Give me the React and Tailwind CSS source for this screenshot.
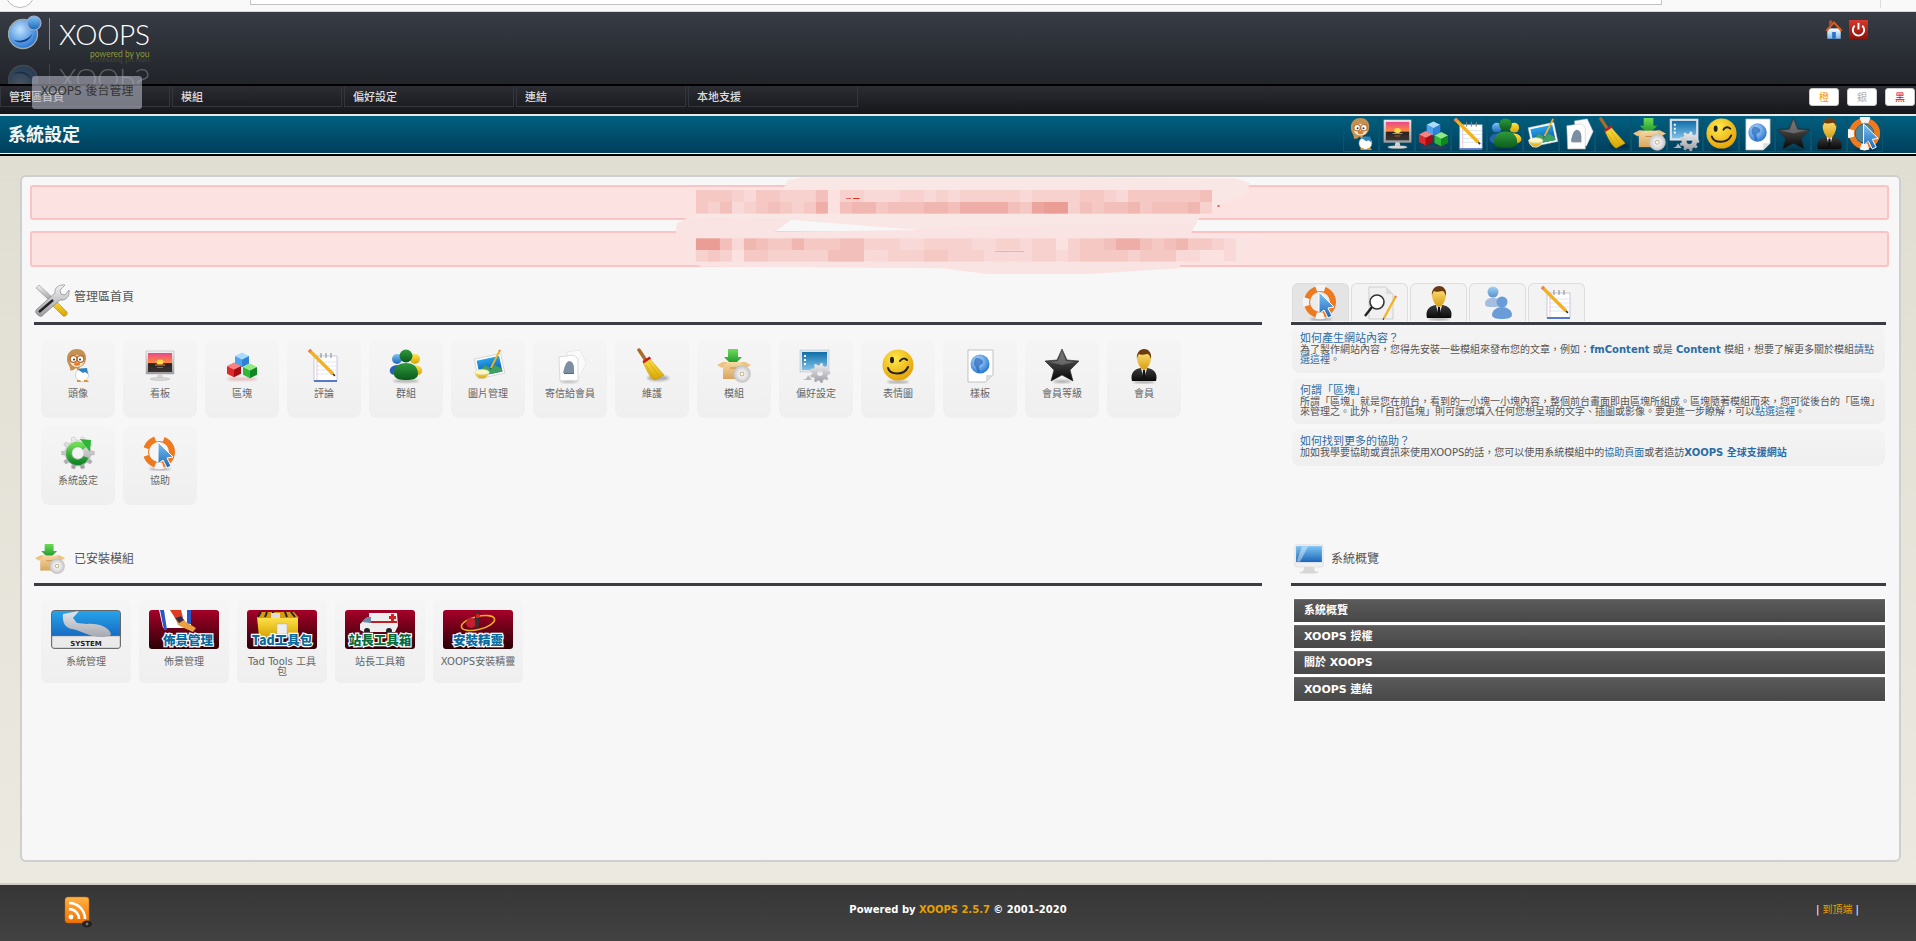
import React from 'react';

// gear outline with a round hole, used by a few of the icons
const gearPath = (cx, cy, r, teeth, hole) => {
  let d = '';
  const step = (Math.PI * 2) / teeth;
  for (let i = 0; i < teeth; i++) {
    const a = i * step;
    const pts = [
      [r * 0.78, a - step * 0.5],
      [r * 0.78, a - step * 0.28],
      [r, a - step * 0.16],
      [r, a + step * 0.16],
      [r * 0.78, a + step * 0.28],
    ];
    pts.forEach(([rad, ang], j) => {
      const x = (cx + rad * Math.cos(ang)).toFixed(2);
      const y = (cy + rad * Math.sin(ang)).toFixed(2);
      d += `${i === 0 && j === 0 ? 'M' : 'L'}${x} ${y}`;
    });
  }
  d += `Z M${cx - hole} ${cy}a${hole} ${hole} 0 1 0 ${hole * 2} 0a${hole} ${hole} 0 1 0 ${-hole * 2} 0Z`;
  return d;
};

const Defs = () => {
  const grads = {
    gBlue: ['#7cc4f4', '#1b66b8'],
    gRed: ['#f25a5a', '#b80c14'],
    gGreen: ['#6fdc58', '#0f8a24'],
    gDarkGreen: ['#2f9a3c', '#0b5a1c'],
    gYellow: ['#ffe34d', '#d6a400'],
    gOrange: ['#ffb347', '#f07000'],
    gBlack: ['#6a6a6a', '#050505'],
    gSilver: ['#f2f2f2', '#9a9aa2'],
    gWrench: ['#e4e6ea', '#a4a8b0'],
    gBox: ['#f6d9a4', '#d9a55f'],
    gMaroon: ['#a60028', '#2c0006'],
    gSky: ['#27a4ea', '#0c4fb0'],
    gScreen: ['#0f6ea8', '#7fc2e8'],
    gSuit: ['#3c3c3c', '#0a0a0a'],
    gFace: ['#ffe680', '#d89c10'],
    gHome: ['#ffffff', '#7db4e8'],
    gPower: ['#d8382c', '#8c1408'],
  };
  return (
    <svg className="absolute w-0 h-0" aria-hidden="true">
      <defs>
        {Object.entries(grads).map(([id, [a, b]]) => (
          <linearGradient key={id} id={id} x1="0" y1="0" x2="0" y2="1">
            <stop offset="0" stopColor={a} />
            <stop offset="1" stopColor={b} />
          </linearGradient>
        ))}
        <linearGradient id="gSunset" x1="0" y1="0" x2="0" y2="1">
          <stop offset="0" stopColor="#e8488c" />
          <stop offset="0.5" stopColor="#ff8a3c" />
          <stop offset="0.56" stopColor="#2a2420" />
          <stop offset="1" stopColor="#3c3430" />
        </linearGradient>
        <radialGradient id="gSmile" cx="0.4" cy="0.3" r="0.8">
          <stop offset="0" stopColor="#ffe94a" />
          <stop offset="1" stopColor="#e29a00" />
        </radialGradient>
        <radialGradient id="gGlobe" cx="0.4" cy="0.35" r="0.7">
          <stop offset="0" stopColor="#bfe2ff" />
          <stop offset="1" stopColor="#1f6fd0" />
        </radialGradient>
        <radialGradient id="gCd" cx="0.5" cy="0.5" r="0.5">
          <stop offset="0" stopColor="#c8b070" />
          <stop offset="0.3" stopColor="#f4f4f4" />
          <stop offset="1" stopColor="#c4c4c4" />
        </radialGradient>
        <filter id="fBlur" x="-30%" y="-100%" width="160%" height="300%">
          <feGaussianBlur stdDeviation="1.2" />
        </filter>
      </defs>
    </svg>
  );
};

const Shadow = ({ cx = 18, cy = 34, rx = 10, ry = 1.4 }) => (
  <ellipse cx={cx} cy={cy} rx={rx} ry={ry} fill="#000" opacity="0.3" filter="url(#fBlur)" />
);

const Cube = ({ x, y, s, top, fill, side }) => (
  <g>
    <path d={`M${x} ${y}l${s} ${-s * 0.5}l${s} ${s * 0.5}l${-s} ${s * 0.5}z`} fill={top} />
    <path d={`M${x} ${y}l${s} ${s * 0.5}v${s * 1.1}l${-s} ${-s * 0.5}z`} fill={fill} />
    <path d={`M${x + s * 2} ${y}l${-s} ${s * 0.5}v${s * 1.1}l${s} ${-s * 0.5}z`} fill={side} />
  </g>
);

const Pencil = ({ x1, y1, x2, y2, w = 3 }) => (
  <g>
    <line x1={x1} y1={y1} x2={x2} y2={y2} stroke="#f4b21a" strokeWidth={w} />
    <line x1={x1} y1={y1} x2={x1 + (x2 - x1) * 0.08} y2={y1 + (y2 - y1) * 0.08} stroke="#e8806a" strokeWidth={w} />
    <line x1={x2} y1={y2} x2={x2 + (x2 - x1) * 0.08} y2={y2 + (y2 - y1) * 0.08} stroke="#333" strokeWidth={w * 0.5} />
  </g>
);

const icons = {
  avatar: (
    <g>
      <ellipse cx="22" cy="27" rx="6.5" ry="6.5" fill="#fff" stroke="#a8b8cc" strokeWidth="0.6" />
      <path d="M17 21l10-1 1 6-3-2-2 1z" fill="#2a84c0" />
      <path d="M17 34h4l-1-2h-3zM24 34h5l-2-2h-3z" fill="#e89020" />
      <path d="M7 11c0-7 5-10 10-10s9 3 9 9c0 5-3 8-6 9l-2 3-2-2c-2 2-4 3-6 2 1-3-3-6-3-11z" fill="#c49152" />
      <ellipse cx="17" cy="13" rx="7" ry="6" fill="#f6ead8" />
      <circle cx="13.5" cy="11" r="3.3" fill="#fff" stroke="#b8682c" strokeWidth="1.2" />
      <circle cx="20.5" cy="11" r="3.3" fill="#fff" stroke="#b8682c" strokeWidth="1.2" />
      <circle cx="14" cy="11.5" r="1" fill="#333" />
      <circle cx="20" cy="11.5" r="1" fill="#333" />
      <ellipse cx="17" cy="16" rx="3" ry="1.8" fill="#e87c20" />
    </g>
  ),
  banner: (
    <g>
      <rect x="4" y="3" width="28" height="23" fill="url(#gSilver)" stroke="#aaa" strokeWidth="0.5" />
      <rect x="6" y="5" width="24" height="19" fill="url(#gSunset)" />
      <ellipse cx="18" cy="14" rx="3.5" ry="2.6" fill="#ffd84a" />
      <rect x="13" y="16.5" width="10" height="1" fill="#e88030" />
      <rect x="15" y="19" width="6" height="1" fill="#a86028" />
      <path d="M16 26h4l1 4h-6z" fill="#d4d4d4" />
      <ellipse cx="18" cy="31" rx="10" ry="1.5" fill="#d8d8d8" stroke="#aaa" strokeWidth="0.4" />
    </g>
  ),
  blocks: (
    <g>
      <ellipse cx="18" cy="31" rx="15" ry="1.6" fill="#c03030" opacity="0.3" filter="url(#fBlur)" />
      <Cube x={11} y={8} s={7} top="#a8dcff" fill="#4ea2ee" side="#2f82d8" />
      <Cube x={3} y={18} s={7} top="#f88080" fill="#e02828" side="#a80c10" />
      <Cube x={19} y={19} s={7} top="#90ec80" fill="#30b838" side="#108820" />
    </g>
  ),
  comment: (
    <g>
      <path d="M8 8h23v24a1 1 0 0 1-1 1H8z" fill="#fff" stroke="#aeb6d0" strokeWidth="0.7" />
      <path d="M8 32h23v2H8z" fill="#5878c8" />
      <path d="M11 8v24" stroke="#e89090" strokeWidth="0.5" />
      <path d="M10 14h20M10 18h20M10 22h20M10 26h20" stroke="#b8c8e8" strokeWidth="0.5" />
      <path d="M15 5v5M20 5v5M25 5v5" stroke="#888" strokeWidth="1" />
      <Pencil x1={3} y1={2} x2={27} y2={26} w={3.4} />
    </g>
  ),
  groups: (
    <g>
      <Shadow cx={18} cy={33} rx={13} />
      <circle cx="27" cy="11" r="5" fill="url(#gYellow)" />
      <path d="M20 19c3-3 12-3 14 2 1 3-1 6-5 6h-9z" fill="url(#gYellow)" />
      <circle cx="9" cy="11" r="5" fill="url(#gBlue)" />
      <path d="M16 19c-3-3-12-3-14 2-1 3 1 6 5 6h9z" fill="#2a62b0" />
      <circle cx="18" cy="8" r="6.5" fill="url(#gDarkGreen)" />
      <path d="M6 26c0-8 6-11 12-11s12 3 12 11c0 5-6 6-12 6s-12-1-12-6z" fill="url(#gDarkGreen)" />
    </g>
  ),
  image: (
    <g>
      <g transform="rotate(-12 20 18)">
        <rect x="6" y="8" width="27" height="20" fill="#fff" stroke="#bbb" strokeWidth="0.5" />
        <rect x="8" y="10" width="23" height="16" fill="url(#gSky)" />
        <path d="M8 22l7-6 6 5 4-3 6 5v3H8z" fill="#3ca060" />
      </g>
      <Pencil x1={30} y1={2} x2={21} y2={20} w={1.8} />
      <path d="M5 24h14a7 7 0 0 1-14 0z" fill="url(#gYellow)" stroke="#ddd" strokeWidth="1" />
      <ellipse cx="12" cy="24" rx="7" ry="2.6" fill="#fff7c0" stroke="#ddd" strokeWidth="0.6" />
    </g>
  ),
  mail: (
    <g>
      <path d="M15 4l13-2 6 13-7 15-10-4z" fill="#fafafa" stroke="#dcdcdc" strokeWidth="0.5" />
      <path d="M7 9l15-2 4 4v22H8z" fill="#fff" stroke="#c4c4c4" strokeWidth="0.6" />
      <path d="M17 13c3 0 5 3 5 7v5H11c1-3 2-11 6-12z" fill="#7c8ea2" />
      <path d="M12 25h10v1H12z" fill="#58687a" />
      <Shadow cx={17} cy={34} rx={9} ry={0.8} />
    </g>
  ),
  broom: (
    <g>
      <ellipse cx="24" cy="30" rx="11" ry="3" fill="#000" opacity="0.28" filter="url(#fBlur)" />
      <line x1="5" y1="2" x2="13" y2="14" stroke="#a86c28" strokeWidth="3.4" strokeLinecap="round" />
      <path d="M9 14l6-4 15 17-9 5c-3 0-8-8-12-18z" fill="url(#gYellow)" stroke="#c09000" strokeWidth="0.5" />
      <path d="M12 17l9 15M15 14l11 16" stroke="#c49a00" strokeWidth="0.5" />
      <path d="M8.5 13l7-4.5 1.6 2-7.5 5z" fill="#cc1820" />
    </g>
  ),
  module: (
    <g>
      <path d="M12 1h10v8h4l-9 9-9-9h4z" fill="url(#gGreen)" />
      <path d="M7 14h22v17H7z" fill="url(#gBox)" />
      <path d="M7 14l-6 3 5 3 5-6zM29 14l6 3-5 3-5-6z" fill="#eec27f" />
      <path d="M14 20h8" stroke="#c48a40" strokeWidth="1" />
      <circle cx="26" cy="26" r="8.5" fill="url(#gCd)" stroke="#bbb" strokeWidth="0.4" />
      <circle cx="26" cy="26" r="2" fill="#fff" stroke="#b09860" strokeWidth="0.8" />
    </g>
  ),
  prefs: (
    <g>
      <rect x="2" y="2" width="29" height="22" fill="#dfe4ea" stroke="#b8bcc4" strokeWidth="0.5" />
      <rect x="4" y="4" width="25" height="18" fill="url(#gScreen)" />
      <path d="M6 7h2v2H6zM6 11h2v2H6zM6 15h2v2H6z" fill="#fff" />
      <path fillRule="evenodd" d={gearPath(22, 25, 10, 9, 3)} fill="url(#gSilver)" stroke="#c4c4c4" strokeWidth="0.3" />
      <path d="M10 27c-1 4-3 4-5 5h9z" fill="#b8b8b8" />
    </g>
  ),
  smile: (
    <g>
      <Shadow cx={18} cy={34} rx={11} />
      <circle cx="18" cy="17" r="15.5" fill="url(#gSmile)" />
      <ellipse cx="12" cy="12" rx="2" ry="3.2" fill="#222" />
      <path d="M20 13c2-3 5-3 7-1" stroke="#222" strokeWidth="2" fill="none" strokeLinecap="round" />
      <path d="M8 20c2 7 16 8 20-1" stroke="#222" strokeWidth="2" fill="none" strokeLinecap="round" />
    </g>
  ),
  template: (
    <g>
      <path d="M6 2h25v25l-7 7H6z" fill="#fff" stroke="#aaa" strokeWidth="0.7" />
      <path d="M31 27h-7v7z" fill="#ddd" />
      <circle cx="18" cy="16" r="9.5" fill="url(#gGlobe)" />
      <path d="M14 10c3 0 7 1 7 4s-4 2-4 5 2 5 0 6c-3-2-2-5-4-7s-1-6 1-8z" fill="#2566b8" opacity="0.7" />
    </g>
  ),
  star: (
    <g>
      <Shadow cx={18} cy={33.5} rx={9} />
      <path d="M18 1l5 11 12 1-9 9 3 11-11-6-11 6 3-11-9-9 12-1z" fill="url(#gBlack)" stroke="#222" strokeWidth="0.6" strokeLinejoin="round" />
      <path d="M18 4l4 9 9 1-9 2-4 1-4-1-9-2 9-1z" fill="#888" opacity="0.55" />
    </g>
  ),
  person: (
    <g>
      <Shadow cx={18} cy={34} rx={11} />
      <path d="M6 33c-2-8 2-12 9-13h6c7 1 11 5 9 13z" fill="url(#gSuit)" />
      <path d="M15 20h6l-3 12z" fill="#fff" />
      <path d="M17 22h2l1 10h-4z" fill="#111" />
      <path d="M11 10c0-6 3-8 7-8s7 2 7 8c0 5-4 12-7 12s-7-7-7-12z" fill="url(#gFace)" />
      <path d="M11 11c-1-6 3-10 7-10s8 3 7 10c-1-3-2-5-4-5-3 1-7 1-8 0-1 1-2 3-2 5z" fill="#6a3a10" />
    </g>
  ),
  help: (
    <g>
      <Shadow cx={18} cy={34} rx={11} />
      <circle cx="17" cy="17" r="13" fill="none" stroke="#ee7a20" strokeWidth="6" />
      <path d="M13 3.5a13 13 0 0 1 9 0M3.5 21a13 13 0 0 1 0-8M13 30.5a13 13 0 0 0 8 0" stroke="#f4f4f4" strokeWidth="6.4" fill="none" />
      <circle cx="17" cy="17" r="9.5" fill="#fff" opacity="0.3" />
      <path d="M16 7l15 15-6 1 4 8-4 2-4-8-5 4z" fill="url(#gBlue)" stroke="#fff" strokeWidth="1" strokeLinejoin="round" />
    </g>
  ),
  system: (
    <g>
      <path fillRule="evenodd" d={gearPath(18, 18, 16.5, 10, 6)} fill="url(#gSilver)" stroke="#aaa" strokeWidth="0.4" />
      <path d="M25 13a9 9 0 1 0 1 9" stroke="url(#gGreen)" strokeWidth="5.5" fill="none" />
      <path d="M20 4l11 1-1 12z" fill="#2fb43a" />
    </g>
  ),
  tools: (
    <g>
      <path d="M2 5l3-3 14 13-3 3z" fill="url(#gSilver)" stroke="#666" strokeWidth="0.4" />
      <path d="M15 19l4-4 14 14c1 2-1 5-4 4z" fill="url(#gYellow)" stroke="#a87c00" strokeWidth="0.5" />
      <path d="M4 32c-3-2-3-4-1-6L21 10c-1-5 4-9 10-8l-5 5 1 4 4 1 4-5c1 6-3 11-9 10L8 33c-1 1-3 0-4-1z" fill="url(#gSilver)" stroke="#666" strokeWidth="0.5" />
      <path d="M5 29L19 17" stroke="#222" strokeWidth="2.4" />
    </g>
  ),
  imac: (
    <g>
      <rect x="2" y="2" width="32" height="25" rx="2" fill="#f0f0f0" stroke="#d0d0d0" strokeWidth="0.5" />
      <rect x="3.500" y="3.500" width="29" height="18" fill="url(#gBlue)" />
      <path d="M4 21l6-17h7L8 21z" fill="#fff" opacity="0.4" />
      <path d="M13 27h10l2 5H11z" fill="#d8d8d8" />
      <ellipse cx="18" cy="33" rx="11" ry="1.4" fill="#ccc" opacity="0.8" />
    </g>
  ),
  magnify: (
    <g>
      <path d="M7 2h17l7 7v25H7z" fill="#f0f0f0" stroke="#bbb" strokeWidth="0.6" />
      <path d="M24 2v7h7z" fill="#ddd" />
      <circle cx="15" cy="17" r="7" fill="#fff" stroke="#333" strokeWidth="1.6" />
      <line x1="10" y1="22" x2="3" y2="31" stroke="#222" strokeWidth="2.4" />
      <Pencil x1={34} y1={11} x2={22} y2={33} w={2.2} />
    </g>
  ),
  usersBlue: (
    <g>
      <circle cx="13" cy="7" r="5.5" fill="url(#gBlue)" opacity="0.7" />
      <path d="M5 19c0-5 4-6 8-6s8 1 8 6c0 3-4 3-8 3s-8 0-8-3z" fill="#a4bee0" />
      <circle cx="22" cy="17" r="5.5" fill="#6a9cd8" />
      <path d="M12 30c0-5 5-8 10-8s10 3 10 8c0 3-5 4-10 4s-10-1-10-4z" fill="#6a9cd8" />
    </g>
  ),
  rss: (
    <g>
      <rect x="2" y="2" width="24" height="26" rx="3" fill="url(#gOrange)" stroke="#c86000" strokeWidth="0.5" />
      <circle cx="8" cy="22" r="2.4" fill="#fff" />
      <path d="M6 14a10 10 0 0 1 10 10M6 8a16 16 0 0 1 16 16" stroke="#fff" strokeWidth="2.6" fill="none" />
      <ellipse cx="24" cy="29" rx="5" ry="3.500" fill="#222" />
      <circle cx="24" cy="29" r="1.400" fill="#777" />
    </g>
  ),
  house: (
    <g>
      <path d="M7 17h22v17H7z" fill="url(#gHome)" />
      <path d="M4 20l14-15 14 15-3 2-11-12-11 12z" fill="#d85c20" />
      <path d="M10 4h5v4l-5 5z" fill="#c84c18" />
      <rect x="15" y="23" width="6" height="11" fill="#2a72c8" />
    </g>
  ),
};

const Icon = ({ name, className = 'w-9 h-9' }) => (
  <svg viewBox="0 0 36 36" className={className}>
    {icons[name]}
  </svg>
);

const Power = () => (
  <svg viewBox="0 0 20 20" className="w-[19px] h-[19px]">
    <rect x="0" y="0" width="20" height="20" fill="url(#gPower)" />
    <path d="M6 6a6 6 0 1 0 8 0" stroke="#fff" strokeWidth="2" fill="none" />
    <path d="M10 3v7" stroke="#fff" strokeWidth="2" />
  </svg>
);

// the four dark red module logos share the same plate and caption
const RedLogo = ({ caption, x = 35, fill = '#0a6aa0', children }) => (
  <svg viewBox="0 0 70 39" className="w-[70px] h-[39px]">
    <rect width="70" height="39" rx="3" fill="url(#gMaroon)" />
    {children}
    <text
      x={x}
      y="35"
      textAnchor="middle"
      fontSize="12.500"
      fontWeight="900"
      fontFamily="'Noto Sans CJK TC',sans-serif"
      fill={fill}
      stroke="#fff"
      strokeWidth="2.400"
      paintOrder="stroke"
    >
      {caption}
    </text>
  </svg>
);

const moduleLogos = {
  system: (
    <svg viewBox="0 0 70 39" className="w-[70px] h-[39px]">
      <rect x="0.500" y="0.500" width="69" height="38" rx="3" fill="url(#gSky)" stroke="#666" />
      <path d="M1 26h68v10a2 2 0 0 1-2 2H3a2 2 0 0 1-2-2z" fill="#eaeaea" stroke="#888" strokeWidth="0.5" />
      <path d="M12 4L28 1L22 8L26 13L36 14C47 13 58 17 60 24C60 27 50 28 42 26C34 24 28 20 21 19C14 18 11 12 12 4Z" fill="url(#gWrench)" />
      <text x="35" y="35.500" textAnchor="middle" fontSize="7" fontWeight="700" fontFamily="'DejaVu Sans',sans-serif" fill="#222">
        SYSTEM
      </text>
    </svg>
  ),
  theme: (
    <RedLogo caption="佈景管理" x={39}>
      <path d="M10 0h32v18H14z" fill="#fff" />
      <path d="M11 0h4l3 20h-3z" fill="#2a56c8" />
      <path d="M38 0h4v14h-4z" fill="#2a56c8" />
      <path d="M21 0h11l2 8h-8z" fill="#e03a20" />
      <path d="M26 8l6-2 5 6 10 6-3 4-9-4-6-3z" fill="#e8a040" />
      <path d="M26 8l6-2 3 4-5 3z" fill="#332a50" />
    </RedLogo>
  ),
  tad: (
    <RedLogo caption="Tad工具包">
      <path d="M10 7h41v20H12z" fill="url(#gYellow)" />
      <path d="M10 8L14 2h33l5 6z" fill="#d89a10" />
      <path d="M14 2l-3 5M20 2l-2 5M26 2v5M38 2l2 5M44 2l4 5" stroke="#222" strokeWidth="2" />
      <rect x="24" y="3" width="9" height="5" fill="#ddd" />
      <rect x="30" y="14" width="10" height="10" fill="#eee" stroke="#aaa" strokeWidth="0.4" />
    </RedLogo>
  ),
  webmaster: (
    <RedLogo caption="站長工具箱" fill="#0a6a3a">
      <path d="M15 14l6-6h3V3h28l1 13-3 6H19l-4-2z" fill="#eee" />
      <path d="M24 12h28" stroke="#c02020" strokeWidth="2" />
      <path d="M17 12l5-5h4v6z" fill="#6a8aa8" />
      <circle cx="22" cy="21" r="3" fill="#222" />
      <circle cx="44" cy="21" r="3" fill="#222" />
      <path d="M46 4h3v2h2v3h-2v2h-3V9h-2V6h2z" fill="#d02020" />
    </RedLogo>
  ),
  install: (
    <RedLogo caption="安裝精靈">
      <ellipse cx="35" cy="13" rx="17" ry="6.500" fill="none" stroke="#e8b020" strokeWidth="1.600" transform="rotate(-14 35 13)" />
      <circle cx="28" cy="13" r="5" fill="#c02030" />
      <path d="M32 1l5 1-2 17-3-1z" fill="#333" />
      <path d="M33 4h3v4h-3z" fill="#d02020" />
    </RedLogo>
  ),
};

const adminTiles = [
  ['avatar', '頭像'],
  ['banner', '看板'],
  ['blocks', '區塊'],
  ['comment', '評論'],
  ['groups', '群組'],
  ['image', '圖片管理'],
  ['mail', '寄信給會員'],
  ['broom', '維護'],
  ['module', '模組'],
  ['prefs', '偏好設定'],
  ['smile', '表情圖'],
  ['template', '樣板'],
  ['star', '會員等級'],
  ['person', '會員'],
  ['system', '系統設定'],
  ['help', '協助'],
];

const toolbarIcons = [
  'avatar', 'banner', 'blocks', 'comment', 'groups', 'image', 'mail', 'broom',
  'module', 'prefs', 'smile', 'template', 'star', 'person', 'help',
];

const installed = [
  ['system', '系統管理'],
  ['theme', '佈景管理'],
  ['tad', 'Tad Tools 工具包'],
  ['webmaster', '站長工具箱'],
  ['install', 'XOOPS安裝精靈'],
];

const navItems = ['管理區首頁', '模組', '偏好設定', '連結', '本地支援'];
const overviewRows = ['系統概覽', 'XOOPS 授權', '關於 XOOPS', 'XOOPS 連結'];

const Logo = () => (
  <div className="flex items-start h-[42px] w-[150px]">
    <svg viewBox="0 0 34 36" className="w-[34px] h-[36px] shrink-0">
      <circle cx="15" cy="20" r="14.500" fill="url(#gGlobe)" stroke="#9aa" strokeWidth="1.400" />
      <path d="M6 26c6 2 14 0 18-6-2 8-13 11-18 6z" fill="#0d3f88" />
      <circle cx="26" cy="9" r="7" fill="url(#gBlue)" stroke="#aac" strokeWidth="1.200" />
    </svg>
    <div className="w-px h-[32px] bg-[#8a8d92] ml-[7px] mt-[4px]" />
    <div className="ml-[9px] flex flex-col">
      <span className="font-['Lato',sans-serif] font-light text-[28px] leading-[30px] text-white mt-[5px] tracking-[-0.3px]">XOOPS</span>
      <span className="font-['Lato',sans-serif] text-[8.500px] leading-[8px] text-[#8b9a35] self-end mt-[1px]">powered by you</span>
    </div>
  </div>
);

const mosaicRows = [
  [60, '3332133222402211122121222221222233213333334'],
  [96, '3241234323604553444554666643788243445344452'],
  [205, '884154335333442221122221122122023346643453321'],
  [240, '232033222224441122233222111122123333233311001'],
];

// Colour of one mosaic cell, level 0 (pale) to 9 (strong)
const mosaicFill = (n) => {
  const t = n / 9;
  const mix = (a, b) => Math.round(a + (b - a) * t);
  return `rgb(${mix(251, 232)},${mix(226, 148)},${mix(225, 138)})`;
};

// Redacted part of the two alert boxes, points are in crop coordinates
const Redaction = () => (
  <svg viewBox="0 0 1568 330" preserveAspectRatio="none" className="absolute left-[640px] top-[170px] w-[640px] h-[110px]">
    <path d="M137 60L350 60L362 30L400 22L1100 22L1460 25L1495 40L1480 75L1400 110L1370 145L1350 190L1250 180L680 180L375 150L130 145L90 160L137 132Z" fill="#f9e7e6" />
    <path d="M90 160L130 143L370 150L330 185L680 180L690 170L1360 160L1350 190L1500 200L1470 270L1330 270L1320 295L1100 312L850 312L740 295L150 290L115 270L110 205L88 190Z" fill="#fae3e3" />
    {mosaicRows.map(([y, cells]) =>
      cells.split('').map((c, i) => (
        <rect key={`${y}-${i}`} x={137 + i * 29.4} y={y} width="29.600" height={y === 60 || y === 205 ? 36 : 35} fill={mosaicFill(Number(c))} />
      ))
    )}
    <rect x="505" y="85" width="12" height="2" fill="#e03020" />
    <rect x="522" y="84" width="16" height="3" fill="#e03020" />
    <rect x="1415" y="106" width="5" height="4" fill="#e02020" />
    <rect x="870" y="244" width="70" height="2" fill="#eb9a90" />
  </svg>
);

const SectionHead = ({ icon, title, iconClass = 'w-9 h-9', textClass, height = 'h-[39px]' }) => (
  <div className={`flex items-start ${height}`}>
    <Icon name={icon} className={iconClass} />
    <span className={`${textClass} text-[12px] leading-[18px] text-[#555]`}>{title}</span>
  </div>
);

const Line = () => <div className="h-[3px] bg-[#3a3d42]" />;

const A = ({ children, bold }) => (
  <span className={`text-[#2b6ca3] ${bold ? 'font-bold' : ''}`}>{children}</span>
);

const HelpCard = ({ title, children, className }) => (
  <div className={`rounded-[8px] bg-gradient-to-b from-[#f4f4f4] to-[#efefef] px-[8px] pt-[6px] ${className}`}>
    <div className="text-[11px] leading-[13px] text-[#2b6ca3]">{title}</div>
    <div className="text-[10px] leading-[10px] text-[#555]">{children}</div>
  </div>
);

const App = () => {
  return (
    <div className="relative w-[1916px] h-[941px] overflow-hidden flex flex-col font-['DejaVu_Sans','Noto_Sans_CJK_TC',sans-serif]">
      <Defs />

      {/* browser chrome left at the top of the capture */}
      <div className="h-[12px] bg-[#f9f9f9] border-b border-[#d8d8d8] flex items-start shrink-0 overflow-hidden">
        <div className="w-[30px] h-[30px] rounded-full bg-white border border-[#bbb] ml-[5px] -mt-[22px] shrink-0" />
        <div className="ml-[215px] w-[1412px] h-[5px] bg-white border-b border-x border-[#c4c4c4] shrink-0" />
        <div className="ml-[218px] w-px h-[8px] bg-[#ddd] shrink-0" />
      </div>

      <div className="relative h-[72px] shrink-0 overflow-hidden bg-gradient-to-b from-[#373c45] to-[#212429] pl-[8px] pt-[2px] flex items-start justify-between">
        <Logo />
        <div className="absolute left-[8px] top-[46px] opacity-25 -scale-y-100">
          <Logo />
        </div>
        <div className="flex items-center gap-[4px] pr-[48px] pt-[4px]">
          <Icon name="house" className="w-[22px] h-[22px]" />
          <Power />
        </div>
      </div>

      <div className="h-[2px] bg-black shrink-0" />
      <div className="h-[28px] shrink-0 flex justify-between bg-gradient-to-b from-[#2b2d34] to-[#16171a]">
        <div className="flex gap-[2px] items-start">
          {navItems.map((item) => (
            <div key={item} className="w-[170px] h-[21px] border border-t-0 border-[#33363c] flex items-center pl-[8px] pt-[3px] text-[11px] leading-[14px] font-medium text-[#ddd]">
              {item}
            </div>
          ))}
        </div>
        <div className="flex gap-[8px] pt-[2px] pr-px items-start">
          <div className="w-[30px] h-[18px] rounded-[3px] bg-white border border-[#ccc] flex items-center justify-center text-[10px] text-[#f59a00]">橙</div>
          <div className="w-[30px] h-[18px] rounded-[3px] bg-white border border-[#ccc] flex items-center justify-center text-[10px] text-[#b0b0b0]">銀</div>
          <div className="w-[30px] h-[18px] rounded-[3px] bg-white border border-[#ccc] flex items-center justify-center text-[10px] text-[#d8001c]">黑</div>
        </div>
      </div>

      <div className="h-[2px] bg-[#e8e8e8] shrink-0" />
      <div className="h-[37px] shrink-0 bg-gradient-to-b from-[#006080] to-[#003f5c] flex items-center justify-between pl-[8px] pr-[33px]">
        <span className="text-[18px] font-bold text-[#f0f4f4]">系統設定</span>
        <div className="flex">
          {toolbarIcons.map((name) => (
            <div key={name} className="w-[36px] h-[35px] flex items-center justify-center border border-[#0a5470]">
              <Icon name={name} className="w-[35px] h-[35px] shrink-0" />
            </div>
          ))}
        </div>
      </div>
      <div className="h-px bg-white shrink-0" />
      <div className="h-[2px] bg-black shrink-0" />

      <div className="flex-1 flex flex-col bg-gradient-to-b from-[#e0ddd2] to-[#ece9e1] px-[20px] pt-[19px]">
        <div className="h-[687px] w-[1881px] border-2 border-[#cfcfcf] rounded-[6px] bg-[#f7f7f7] pl-[8px] pr-[10px] pt-[8px]">
          <div className="h-[35px] border-2 border-[#fcc2c4] rounded-[3px] bg-[#fce3e2]" />
          <div className="h-[36px] mt-[11px] border-2 border-[#fcc2c4] rounded-[3px] bg-[#fce3e2]" />

          <div className="flex mt-[16px] ml-[4px]">
            <div className="w-[1228px]">
              <SectionHead icon="tools" title="管理區首頁" textClass="ml-[4px] mt-[5px]" />
              <Line />
              <div className="flex flex-wrap gap-[8px] pt-[14px] px-[7px]">
                {adminTiles.map(([icon, label]) => (
                  <div key={label} className="w-[74px] h-[79px] rounded-[8px] bg-gradient-to-b from-[#f5f5f5] to-[#efefef] flex flex-col items-center pt-[9px]">
                    <Icon name={icon} />
                    <span className="mt-[4px] text-[10px] leading-[12px] text-[#666]">{label}</span>
                  </div>
                ))}
              </div>
            </div>

            <div className="w-[595px] ml-[29px]">
              <div className="flex gap-[2px] pl-px h-[38px] mb-px">
                {['help', 'magnify', 'person', 'usersBlue', 'comment'].map((name, i) => (
                  <div key={name} className={`w-[57px] h-[38px] rounded-t-[6px] border border-b-0 border-[#ddd] flex justify-center items-end ${i === 0 ? 'bg-[#e4e4e4]' : 'bg-[#f3f3f3]'}`}>
                    <Icon name={name} />
                  </div>
                ))}
              </div>
              <Line />
              <div className="flex flex-col gap-[5px] mt-px pl-px pr-px">
                <HelpCard title="如何產生網站內容？" className="h-[47px]">
                  為了製作網站內容，您得先安裝一些模組來發布您的文章，例如：<A bold>fmContent</A> 或是 <A bold>Content</A> 模組，想要了解更多關於模組<A>請點選這裡</A>。
                </HelpCard>
                <HelpCard title="何謂「區塊」" className="h-[46px]">
                  所謂「區塊」就是您在前台，看到的一小塊一小塊內容，整個前台畫面即由區塊所組成。區塊隨著模組而來，您可從後台的「區塊」來管理之。此外，「自訂區塊」則可讓您填入任何您想呈現的文字、插圖或影像。要更進一步瞭解，可以<A>點選這裡</A>。
                </HelpCard>
                <HelpCard title="如何找到更多的協助？" className="h-[37px]">
                  加如我學要協助或資訊來使用XOOPS的話，您可以使用系統模組中的<A>協助頁面</A>或者造訪<A bold>XOOPS 全球支援網站</A>
                </HelpCard>
              </div>
            </div>
          </div>

          <div className="flex mt-[38px] ml-[4px]">
            <div className="w-[1228px]">
              <SectionHead icon="module" title="已安裝模組" height="h-[40px]" iconClass="w-[32px] h-[32px]" textClass="ml-[8px] mt-[7px]" />
              <Line />
              <div className="flex gap-[8px] pt-[14px] px-[7px]">
                {installed.map(([logo, label]) => (
                  <div key={logo} className="w-[90px] h-[83px] rounded-[6px] bg-gradient-to-b from-[#f5f5f5] to-[#efefef] flex flex-col items-center pt-[10px] px-[7px]">
                    {moduleLogos[logo]}
                    <span className="mt-[8px] text-[10px] leading-[10px] text-[#666] text-center">{label}</span>
                  </div>
                ))}
              </div>
            </div>

            <div className="w-[595px] ml-[29px]">
              <div className="pl-[2px]">
                <SectionHead icon="imac" title="系統概覽" height="h-[40px]" iconClass="w-[32px] h-[32px]" textClass="ml-[6px] mt-[7px]" />
              </div>
              <Line />
              <div className="mt-[12px] ml-[2px] bg-white p-px flex flex-col gap-[3px]">
                {overviewRows.map((row, i) => (
                  <div key={row} className={`${i === 3 ? 'h-[24px]' : 'h-[23px]'} bg-gradient-to-b from-[#5a5a5a] to-[#484848] border-t border-[#6c6c6c] flex items-center pl-[10px] pt-px text-[11px] font-bold text-white`}>
                    {row}
                  </div>
                ))}
              </div>
            </div>
          </div>
        </div>
      </div>

      <div className="h-[58px] shrink-0 border-t-2 border-[#cfcdc6] bg-gradient-to-b from-[#363636] to-[#424242] grid grid-cols-3 pt-[12px]">
        <div className="pl-[63px]">
          <Icon name="rss" className="w-[36px] h-[36px] -mt-[2px]" />
        </div>
        <div className="text-center text-[10px] leading-[26px] font-bold text-white">
          Powered by <span className="text-[#e6a100]">XOOPS 2.5.7</span> © 2001-2020
        </div>
        <div className="text-right pr-[57px] text-[10px] leading-[26px] text-white">
          | <span className="text-[#e6a100]">到頂端</span> |
        </div>
      </div>

      <Redaction />

      <div className="absolute left-[32px] top-[76px] w-[110px] h-[33px] rounded-[3px] bg-[#b4b8c4]/60 flex items-center justify-center pb-[4px] text-[12px] text-[#333]">
        XOOPS 後台管理
      </div>
    </div>
  );
};

export default App;
